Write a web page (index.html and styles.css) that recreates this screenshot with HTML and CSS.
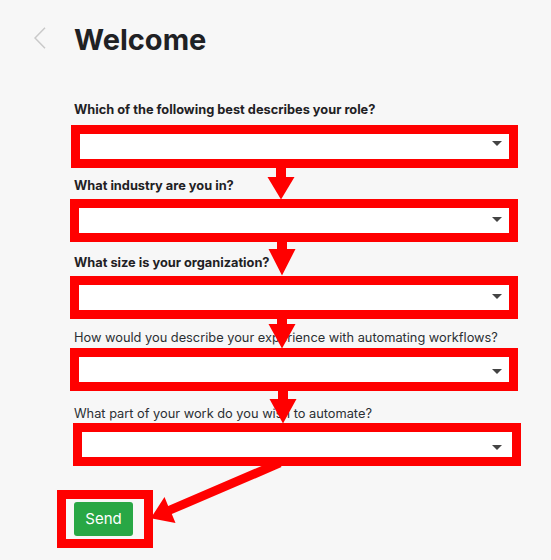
FILE: index.html
```html
<!DOCTYPE html>
<html lang="en">
<head>
<meta charset="utf-8">
<title>Welcome</title>
<link rel="stylesheet" href="styles.css">
</head>
<body>
<div class="page">
  <header class="head">
    <a class="back" href="#" aria-label="Back">
      <svg width="12" height="22" viewBox="0 0 12 22"><path d="M11 0.8 L1 11 L11 21.2" fill="none" stroke="#c9c9c9" stroke-width="1.5"/></svg>
    </a>
    <h1 class="title">Welcome</h1>
  </header>

  <form class="form">
    <div class="field f1">
      <label class="label strong">Which of the following best describes your role?</label>
      <div class="select"><svg class="caret" width="10" height="5" viewBox="0 0 10 5"><polygon points="0,0 10,0 5,5" fill="#444"/></svg></div>
    </div>
    <div class="field f2">
      <label class="label strong">What industry are you in?</label>
      <div class="select"><svg class="caret" width="10" height="5" viewBox="0 0 10 5"><polygon points="0,0 10,0 5,5" fill="#444"/></svg></div>
    </div>
    <div class="field f3">
      <label class="label strong">What size is your organization?</label>
      <div class="select"><svg class="caret" width="10" height="5" viewBox="0 0 10 5"><polygon points="0,0 10,0 5,5" fill="#444"/></svg></div>
    </div>
    <div class="field f4">
      <label class="label">How would you describe your experience with automating workflows?</label>
      <div class="select"><svg class="caret" width="10" height="5" viewBox="0 0 10 5"><polygon points="0,0 10,0 5,5" fill="#444"/></svg></div>
    </div>
    <div class="field f5">
      <label class="label">What part of your work do you wish to automate?</label>
      <div class="select"><svg class="caret" width="10" height="5" viewBox="0 0 10 5"><polygon points="0,0 10,0 5,5" fill="#444"/></svg></div>
    </div>
    <div class="send-box">
      <button type="button" class="send">Send</button>
    </div>
  </form>

  <svg class="annot" width="551" height="560" viewBox="0 0 551 560">
    <g fill="#ff0000">
      <polygon points="276,165 286,165 286,177 294.5,177 281,199.5 267.5,177 276,177"/>
      <polygon points="277,239 287,239 287,249 295.5,249 282,275.5 268.5,249 277,249"/>
      <polygon points="277,316 287,316 287,324 295.5,324 282,348.5 268.5,324 277,324"/>
      <polygon points="278,388 288,388 288,399 296.5,399 283,423.5 269.5,399 278,399"/>
      <polygon points="281.5,467.1 171.8,514.1 175.5,522.9 150.7,518.3 164.5,497.1 168.2,505.9 277.9,458.9"/>
    </g>
  </svg>
</div>
</body>
</html>
```

FILE: styles.css
```css
* { box-sizing: border-box; }

html, body {
  margin: 0;
  padding: 0;
  background: #f7f7f7;
}

body {
  font-family: Inter, "Noto Sans", "Liberation Sans", sans-serif;
  color: #212529;
}

.page {
  position: relative;
  width: 551px;
  height: 560px;
  overflow: hidden;
}

.head {
  display: flex;
  align-items: flex-start;
  padding-top: 22px;
  padding-left: 34px;
}

.back {
  display: block;
  width: 12px;
  height: 22px;
  margin-top: 5px;
}

.back svg { display: block; }

.title {
  margin: 0 0 0 28px;
  font-size: 29px;
  line-height: 36px;
  font-weight: 700;
  color: #1f2124;
}

.form {
  display: flex;
  flex-direction: column;
  margin-top: 44px;
}

.label {
  display: block;
  margin-left: 74px;
  font-size: 12.8px;
  line-height: 16px;
  font-weight: 400;
  color: #2b2f33;
}

.label.strong { font-weight: 700; color: #1f2124; }

.select {
  display: flex;
  align-items: flex-start;
  justify-content: flex-end;
  width: 448px;
  height: 43px;
  margin-left: 70px;
  border: 9px solid #ff0000;
  background: #ffffff;
}

.caret {
  display: block;
  margin-right: 7px;
}

.f1 .label { margin-bottom: 7px; }
.f1 .select { margin-left: 71px; width: 447px; }
.f1 .caret { margin-top: 7px; }

.f2 { margin-top: 10px; }
.f2 .label { margin-bottom: 5px; }
.f2 .caret { margin-top: 9px; }

.f3 { margin-top: 13px; }
.f3 .label { margin-bottom: 5px; }
.f3 .caret { margin-top: 9px; }

.f4 { margin-top: 11px; }
.f4 .label { margin-bottom: 2px; }
.f4 .caret { margin-top: 12px; }

.f5 { margin-top: 15px; }
.f5 .label { margin-bottom: 1px; }
.f5 .select { margin-left: 73px; }
.f5 .caret { margin-top: 13px; margin-right: 10px; }

.send-box {
  width: 96px;
  height: 58px;
  margin-top: 24px;
  margin-left: 57px;
  border: 9px solid #ff0000;
  padding: 3px 0 0 8px;
}

.send {
  display: block;
  width: 59px;
  height: 34px;
  padding: 0;
  border: 0;
  border-radius: 3px;
  background: #28a745;
  color: #ffffff;
  font-family: Inter, "Noto Sans", "Liberation Sans", sans-serif;
  font-size: 15px;
  line-height: 34px;
  text-align: center;
}

.annot {
  position: absolute;
  left: 0;
  top: 0;
  pointer-events: none;
}
```
